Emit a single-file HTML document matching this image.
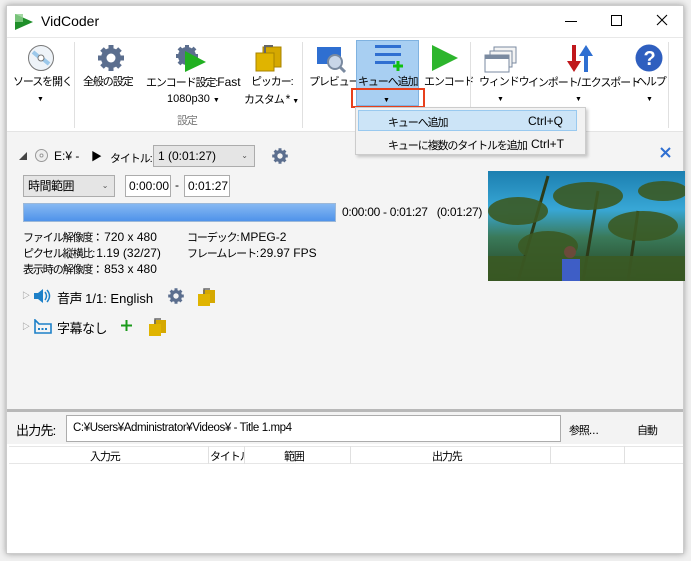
<!DOCTYPE html>
<html><head><meta charset="utf-8"><style>
*{margin:0;padding:0;box-sizing:border-box}
body{width:691px;height:561px;background:#f0f0f0;position:relative;overflow:hidden;font-family:"Liberation Sans","Noto Sans CJK JP",sans-serif;font-size:11px;color:#000;letter-spacing:-1.1px}
.l{letter-spacing:0;font-size:12px}
.a{position:absolute}
.win{left:6px;top:5px;width:678px;height:549px;background:#fff;box-shadow:0 0 6px rgba(0,0,0,.35);border:1px solid #ccc}
.lbl{position:absolute;font-size:11px;text-align:center;white-space:nowrap;line-height:16px}
.arr{font-size:7px;letter-spacing:0}
.sep{position:absolute;width:1px;background:#e0e0e0;top:42px;height:86px}
.box{position:absolute;background:#fff;border:1px solid #acacac;font-size:12px;line-height:18px;padding-left:3px;letter-spacing:0}
.cmb{position:absolute;background:#e5e5e5;border:1px solid #acacac;line-height:18px;padding-left:4px}
</style></head><body>
<div class="a win"></div>
<svg class="a" style="left:13px;top:12px" width="22" height="20"><polygon points="2,2 20,10 2,18" fill="#1f8f2a"/><rect x="2" y="2" width="8" height="8" fill="#8fd08f" opacity=".8"/></svg>
<div class="a l" style="left:41px;top:13px;font-size:14px">VidCoder</div>
<div class="a" style="left:565px;top:21px;width:12px;height:1px;background:#000"></div>
<div class="a" style="left:611px;top:15px;width:11px;height:11px;border:1px solid #000"></div>
<svg class="a" style="left:656px;top:14px" width="12" height="12"><path d="M1 1L11 11M11 1L1 11" stroke="#000" stroke-width="1.1"/></svg>
<div class="a" style="left:7px;top:37px;width:676px;height:1px;background:#e8e8e8"></div>
<svg class="a" style="left:27px;top:44px" width="28" height="28"><circle cx="14" cy="14" r="12.5" fill="#eef3f8" stroke="#777"/><path d="M6 8 L12 13 M16 15 L22 20" stroke="#9cc8ea" stroke-width="4"/><circle cx="14" cy="14" r="3" fill="#fff" stroke="#777"/></svg>
<div class="lbl" style="left:13px;top:74px">ソースを開く</div>
<div class="lbl arr" style="left:37px;top:92px">▼</div>
<div class="sep" style="left:74px"></div>
<svg class="a" style="left:96px;top:43px" width="30" height="30" viewBox="0 0 30 30"><g fill="#5b6e8e"><circle cx="15" cy="15" r="10"/><g stroke="#5b6e8e" stroke-width="5"><path d="M15 2V28M2 15H28M6 6L24 24M24 6L6 24"/></g></g><circle cx="15" cy="15" r="4.5" fill="#fff"/></svg>
<div class="lbl" style="left:83px;top:74px">全般の設定</div>
<svg class="a" style="left:174px;top:43px" width="34" height="30" viewBox="0 0 34 30"><g fill="#5b6e8e"><circle cx="13" cy="13" r="9"/><g stroke="#5b6e8e" stroke-width="4"><path d="M13 2V24M2 13H24M5 5L21 21M21 5L5 21"/></g></g><polygon points="11,8 32,19 11,29" fill="#21b021"/></svg>
<div class="lbl" style="left:146px;top:74px">エンコード設定:<span class="l">Fast</span></div>
<div class="lbl l" style="left:167px;top:91px">1080p30 <span class="arr">▼</span></div>
<svg class="a" style="left:253px;top:43px" width="30" height="30"><rect x="10" y="4" width="18" height="20" fill="#d5a800" stroke="#a88300"/><rect x="3" y="10" width="18" height="18" fill="#e0b400" stroke="#a88300"/><path d="M12 10V3H20" stroke="#666" stroke-width="2" fill="none"/></svg>
<div class="lbl" style="left:251px;top:74px">ピッカー:</div>
<div class="lbl" style="left:244px;top:91px">カスタム <span class="l">*</span> <span class="arr">▼</span></div>
<div class="lbl" style="left:177px;top:113px;color:#777">設定</div>
<div class="sep" style="left:302px"></div>
<svg class="a" style="left:316px;top:46px" width="30" height="28"><rect x="1" y="1" width="24" height="17" fill="#2f6fd1"/><circle cx="19" cy="16" r="7" fill="#c9d6e8" stroke="#7a8aa0" stroke-width="2"/><path d="M24 21L29 26" stroke="#7a8aa0" stroke-width="3"/></svg>
<div class="lbl" style="left:309px;top:74px">プレビュー</div>
<div class="a" style="left:356px;top:40px;width:63px;height:66px;background:#a8cff2;border:1px solid #7fb2e0"></div>
<svg class="a" style="left:373px;top:43px" width="30" height="30"><g fill="#2f6fd1"><rect x="2" y="2" width="26" height="3"/><rect x="2" y="10" width="26" height="3"/><rect x="2" y="18" width="20" height="3"/></g><path d="M25 18V28M20 23H30" stroke="#10c010" stroke-width="3"/></svg>
<div class="lbl" style="left:358px;top:74px">キューへ追加</div>
<div class="a" style="left:351px;top:88px;width:74px;height:20px;border:2px solid #e8401c"></div>
<div class="lbl arr" style="left:383px;top:93px">▼</div>
<svg class="a" style="left:430px;top:44px" width="30" height="28"><polygon points="2,1 28,14 2,27" fill="#2db52d"/></svg>
<div class="lbl" style="left:424px;top:74px">エンコード</div>
<div class="sep" style="left:470px"></div>
<svg class="a" style="left:484px;top:46px" width="34" height="28"><rect x="10" y="1" width="22" height="16" fill="#f4f4f4" stroke="#7a8aa0"/><rect x="6" y="5" width="22" height="16" fill="#f4f4f4" stroke="#7a8aa0"/><rect x="1" y="9" width="24" height="17" fill="#fff" stroke="#7a8aa0"/><rect x="1" y="9" width="24" height="4" fill="#7a8aa0"/></svg>
<div class="lbl" style="left:479px;top:74px">ウィンドウ</div>
<div class="lbl arr" style="left:497px;top:92px">▼</div>
<svg class="a" style="left:564px;top:43px" width="30" height="30"><path d="M8 2V18H3L10 29L17 18H12V2Z" fill="#c0181c"/><path d="M20 29V13H15L22 2L29 13H24V29Z" fill="#2f6fd1"/></svg>
<div class="lbl" style="left:528px;top:74px">インポート<span class="l">/</span>エクスポート</div>
<div class="lbl arr" style="left:575px;top:92px">▼</div>
<svg class="a" style="left:635px;top:44px" width="28" height="28"><circle cx="14" cy="14" r="13.5" fill="#2f5fbf"/><text x="14" y="21" text-anchor="middle" font-family="Liberation Sans" font-weight="bold" font-size="20" fill="#fff">?</text></svg>
<div class="lbl" style="left:636px;top:74px">ヘルプ</div>
<div class="lbl arr" style="left:646px;top:92px">▼</div>
<div class="sep" style="left:668px"></div>
<div class="a" style="left:7px;top:131px;width:676px;height:278px;background:#f4f4f4;border-top:1px solid #e4e4e4"></div>
<div class="a" style="left:355px;top:107px;width:231px;height:48px;background:#f2f2f2;border:1px solid #ccc;box-shadow:2px 2px 3px rgba(0,0,0,.2)"></div>
<div class="a" style="left:358px;top:110px;width:219px;height:21px;background:#cce4f7;border:1px solid #99c9ef"></div>
<div class="a" style="left:388px;top:114px">キューへ追加</div>
<div class="a l" style="left:528px;top:114px">Ctrl+Q</div>
<div class="a" style="left:388px;top:137px">キューに複数のタイトルを追加</div>
<div class="a l" style="left:531px;top:137px">Ctrl+T</div>
<div class="a" style="left:19px;top:151px;font-size:8px;color:#444">◢</div>
<svg class="a" style="left:35px;top:149px" width="13" height="13"><circle cx="6.5" cy="6.5" r="6" fill="#eee" stroke="#999"/><circle cx="6.5" cy="6.5" r="1.5" fill="#fff" stroke="#999"/></svg>
<div class="a l" style="left:54px;top:149px">E:¥ -</div>
<div class="a" style="left:91px;top:148px;font-size:11px">▶</div>
<div class="a" style="left:110px;top:150px">タイトル:</div>
<div class="cmb l" style="left:153px;top:145px;width:102px;height:22px;line-height:20px">1 (0:01:27)<span style="position:absolute;right:6px;font-size:8px;color:#555">⌄</span></div>
<svg class="a" style="left:271px;top:147px" width="18" height="18" viewBox="0 0 30 30"><g fill="#5b6e8e"><circle cx="15" cy="15" r="10"/><g stroke="#5b6e8e" stroke-width="5"><path d="M15 2V28M2 15H28M6 6L24 24M24 6L6 24"/></g></g><circle cx="15" cy="15" r="4.5" fill="#f4f4f4"/></svg>
<svg class="a" style="left:660px;top:147px" width="11" height="11"><path d="M1 1L10 10M10 1L1 10" stroke="#2f6fd1" stroke-width="2"/></svg>
<div class="cmb" style="left:23px;top:175px;width:92px;height:22px;line-height:20px;font-size:12px;letter-spacing:-.5px">時間範囲<span style="position:absolute;right:6px;font-size:8px;color:#555">⌄</span></div>
<div class="box" style="left:125px;top:175px;width:46px;height:22px;line-height:20px">0:00:00</div>
<div class="a l" style="left:175px;top:178px">-</div>
<div class="box" style="left:184px;top:175px;width:46px;height:22px;line-height:20px">0:01:27</div>
<div class="a" style="left:23px;top:203px;width:313px;height:19px;background:linear-gradient(#86b8f2,#4f93ea);border:1px solid #9cb8d8"></div>
<div class="a l" style="left:342px;top:205px;letter-spacing:-.3px">0:00:00 - 0:01:27&nbsp;&nbsp;&nbsp;(0:01:27)</div>
<div class="a" style="left:23px;top:230px;line-height:15px">ファイル解像度： <span class="l">720 x 480</span><br>ピクセル縦横比: <span class="l">1.19 (32/27)</span><br>表示時の解像度： <span class="l">853 x 480</span></div>
<div class="a" style="left:187px;top:230px;line-height:15px">コーデック: <span class="l">MPEG-2</span><br>フレームレート: <span class="l">29.97 FPS</span></div>
<div class="a" style="left:488px;top:171px;width:197px;height:110px;background:linear-gradient(180deg,#1c7fb0 0%,#38a7d6 35%,#3a7a5a 60%,#24401e 100%)"></div>
<svg class="a" style="left:488px;top:171px" width="197" height="110"><g stroke="#2c3a18" stroke-width="3" fill="none"><path d="M30 110 L60 5"/><path d="M95 110 L110 20"/><path d="M140 110 L150 40"/></g><g fill="#3b5a24" opacity=".9"><ellipse cx="30" cy="40" rx="30" ry="14"/><ellipse cx="100" cy="25" rx="35" ry="14"/><ellipse cx="155" cy="55" rx="35" ry="15"/><ellipse cx="60" cy="75" rx="30" ry="15"/><ellipse cx="175" cy="20" rx="25" ry="10"/><rect x="0" y="85" width="197" height="25"/></g><rect x="74" y="88" width="18" height="22" fill="#3e5ec6"/><circle cx="82" cy="81" r="6" fill="#6b4a3a"/></svg>
<div class="a" style="left:22px;top:290px;font-size:8px;color:#777">▷</div>
<svg class="a" style="left:33px;top:288px" width="18" height="16"><path d="M1 5H5L10 1V15L5 11H1Z" fill="#1d80c8"/><path d="M12 4Q15 8 12 12M14 2Q19 8 14 14" stroke="#1d80c8" stroke-width="1.5" fill="none"/></svg>
<div class="a" style="left:57px;top:288px;font-size:13px;letter-spacing:-.5px">音声 <span class="l" style="font-size:13px">1/1: English</span></div>
<svg class="a" style="left:167px;top:287px" width="18" height="18" viewBox="0 0 30 30"><g fill="#5b6e8e"><circle cx="15" cy="15" r="10"/><g stroke="#5b6e8e" stroke-width="5"><path d="M15 2V28M2 15H28M6 6L24 24M24 6L6 24"/></g></g><circle cx="15" cy="15" r="4.5" fill="#f4f4f4"/></svg>
<svg class="a" style="left:196px;top:287px" width="20" height="20"><rect x="7" y="3" width="12" height="13" fill="#d5a800"/><rect x="2" y="7" width="12" height="12" fill="#e0b400"/><path d="M8 7V2H14" stroke="#666" stroke-width="1.5" fill="none"/></svg>
<div class="a" style="left:22px;top:321px;font-size:8px;color:#777">▷</div>
<svg class="a" style="left:34px;top:319px" width="18" height="15"><path d="M1 1L5 5H17V14H1Z" fill="none" stroke="#1d80c8" stroke-width="1.6"/><path d="M4 10H14" stroke="#1d80c8" stroke-width="2" stroke-dasharray="2 1.5"/></svg>
<div class="a" style="left:57px;top:318px;font-size:13px;letter-spacing:-.5px">字幕なし</div>
<svg class="a" style="left:121px;top:320px" width="11" height="11"><path d="M5.5 0V11M0 5.5H11" stroke="#1a9a1a" stroke-width="2"/></svg>
<svg class="a" style="left:147px;top:317px" width="20" height="20"><rect x="7" y="3" width="12" height="13" fill="#d5a800"/><rect x="2" y="7" width="12" height="12" fill="#e0b400"/><path d="M8 7V2H14" stroke="#666" stroke-width="1.5" fill="none"/></svg>
<div class="a" style="left:7px;top:409px;width:676px;height:3px;background:#b8b8b8"></div>
<div class="a" style="left:7px;top:412px;width:676px;height:32px;background:#f3f3f3"></div>
<div class="a" style="left:16px;top:420px;font-size:13px;letter-spacing:-.8px">出力先:</div>
<div class="box" style="left:66px;top:415px;width:495px;height:27px;line-height:25px;padding-left:6px;font-size:11.5px;letter-spacing:-.4px">C:¥Users¥Administrator¥Videos¥ - Title 1.mp4</div>
<div class="a" style="left:569px;top:422px">参照<span class="l">...</span></div>
<div class="a" style="left:637px;top:422px">自動</div>
<div class="a" style="left:9px;top:446px;width:674px;height:18px;border-top:1px solid #e6e6e6;border-bottom:1px solid #e6e6e6;background:#fff"></div>
<div class="a" style="left:90px;top:448px">入力元</div>
<div class="a" style="left:208px;top:446px;width:1px;height:18px;background:#e0e0e0"></div>
<div class="a" style="left:210px;top:448px;width:34px;overflow:hidden;white-space:nowrap">タイトル</div>
<div class="a" style="left:244px;top:446px;width:1px;height:18px;background:#e0e0e0"></div>
<div class="a" style="left:284px;top:448px">範囲</div>
<div class="a" style="left:350px;top:446px;width:1px;height:18px;background:#e0e0e0"></div>
<div class="a" style="left:432px;top:448px">出力先</div>
<div class="a" style="left:550px;top:446px;width:1px;height:18px;background:#e0e0e0"></div>
<div class="a" style="left:624px;top:446px;width:1px;height:18px;background:#e0e0e0"></div>
</body></html>
